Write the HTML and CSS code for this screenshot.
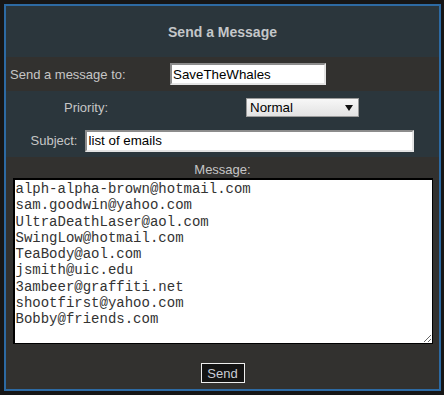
FILE: index.html
```html
<!DOCTYPE html>
<html lang="en">
<head>
    <meta charset="UTF-8">
    <title>Send a Message</title>
    <link rel="stylesheet" href="styles.css">
</head>
<body>
    <form class="frame" id="messageForm">
        <div class="head">Send a Message</div>

        <div class="row row-to">
            <label for="to">Send a message to:</label>
            <div><input type="text" id="to" class="field field-to" value="SaveTheWhales"></div>
        </div>

        <div class="row row-priority">
            <label for="priority" class="centered">Priority:</label>
            <div class="centered">
                <span class="pick">
                    <select id="priority">
                        <option>Normal</option>
                        <option>High</option>
                        <option>Low</option>
                    </select>
                </span>
            </div>
        </div>

        <div class="row-subject">
            <label for="subject">Subject:</label>
            <input type="text" id="subject" class="field field-subject" value="list of emails">
        </div>

        <!-- Message body -->
        <div class="body">
            <label for="message">Message:</label>
            <textarea id="message">alph-alpha-brown@hotmail.com
sam.goodwin@yahoo.com
UltraDeathLaser@aol.com
SwingLow@hotmail.com
TeaBody@aol.com
jsmith@uic.edu
3ambeer@graffiti.net
shootfirst@yahoo.com
Bobby@friends.com</textarea>
            <button type="button" class="send">Send</button>
        </div>
    </form>
</body>
</html>
```

FILE: styles.css
```css
body { margin: 0; padding: 4px; background: #161616; font-family: "Liberation Sans", Arial, sans-serif; }

.frame {
    width: 433px;
    height: 383px;
    border: 2px solid #2d6aa3;
    background: #2b363c;
    display: flex;
    flex-direction: column;
    color: #c6c6c6;
    font-size: 13px;
}

.head {
    height: 51px;
    display: flex;
    align-items: center;
    justify-content: center;
    font-size: 14px;
    font-weight: bold;
    color: #c4c7c9;
}

.row { display: grid; grid-template-columns: 160px 1fr; align-items: center; }
.row-to { height: 34px; background: #32312f; }
.row-to label { padding-left: 4px; }
.row-to div { padding-left: 4px; display: flex; }
.row-priority { height: 33px; padding-bottom: 1px; box-sizing: border-box; }
.centered { text-align: center; }

.field {
    box-sizing: border-box;
    height: 22px;
    border: 2px solid;
    border-color: #8c8c8c #e4e4e4 #e4e4e4 #8c8c8c;
    padding: 0 1px;
    background: #fff;
    font-family: "Liberation Sans", Arial, sans-serif;
    font-size: 13.33px;
    color: #000;
    outline: none;
}
.field-to { width: 156px; }
.field-subject { width: 329px; }

.pick { position: relative; display: inline-block; vertical-align: middle; }
.pick select {
    appearance: none;
    -webkit-appearance: none;
    width: 113px;
    height: 19px;
    margin: 0;
    padding: 0 0 0 3px;
    border: 1px solid #9a9a9a;
    border-radius: 0;
    background: linear-gradient(#f7f7f7, #e2e2e2);
    font-family: "Liberation Sans", Arial, sans-serif;
    font-size: 13.33px;
    color: #000;
    outline: none;
}
.pick::after {
    content: "";
    position: absolute;
    right: 6px;
    top: 7px;
    border-left: 4px solid transparent;
    border-right: 4px solid transparent;
    border-top: 6px solid #111;
    pointer-events: none;
}

.row-subject {
    height: 33px;
    display: flex;
    align-items: center;
    justify-content: center;
    gap: 8px;
}

.body {
    flex: 1;
    background: #32312f;
    display: flex;
    flex-direction: column;
    align-items: center;
    padding-top: 5px;
}
.body label { line-height: 16px; }

textarea {
    box-sizing: border-box;
    width: 420px;
    height: 166px;
    margin-top: 0;
    border: 1px solid #000;
    box-shadow: inset 1px 1px 0 #000;
    padding: 2px 2px;
    background: #fff;
    color: #333;
    font-family: "Liberation Mono", "Courier New", monospace;
    font-size: 14px;
    line-height: 16.25px;
    resize: both;
    outline: none;
}

.send {
    margin-top: 19px;
    box-sizing: border-box;
    width: 44px;
    height: 20px;
    padding: 0;
    border: 1px solid #eee;
    background: #141414;
    color: #c9ccd6;
    font-family: "Liberation Sans", Arial, sans-serif;
    font-size: 13px;
    cursor: pointer;
}
```
